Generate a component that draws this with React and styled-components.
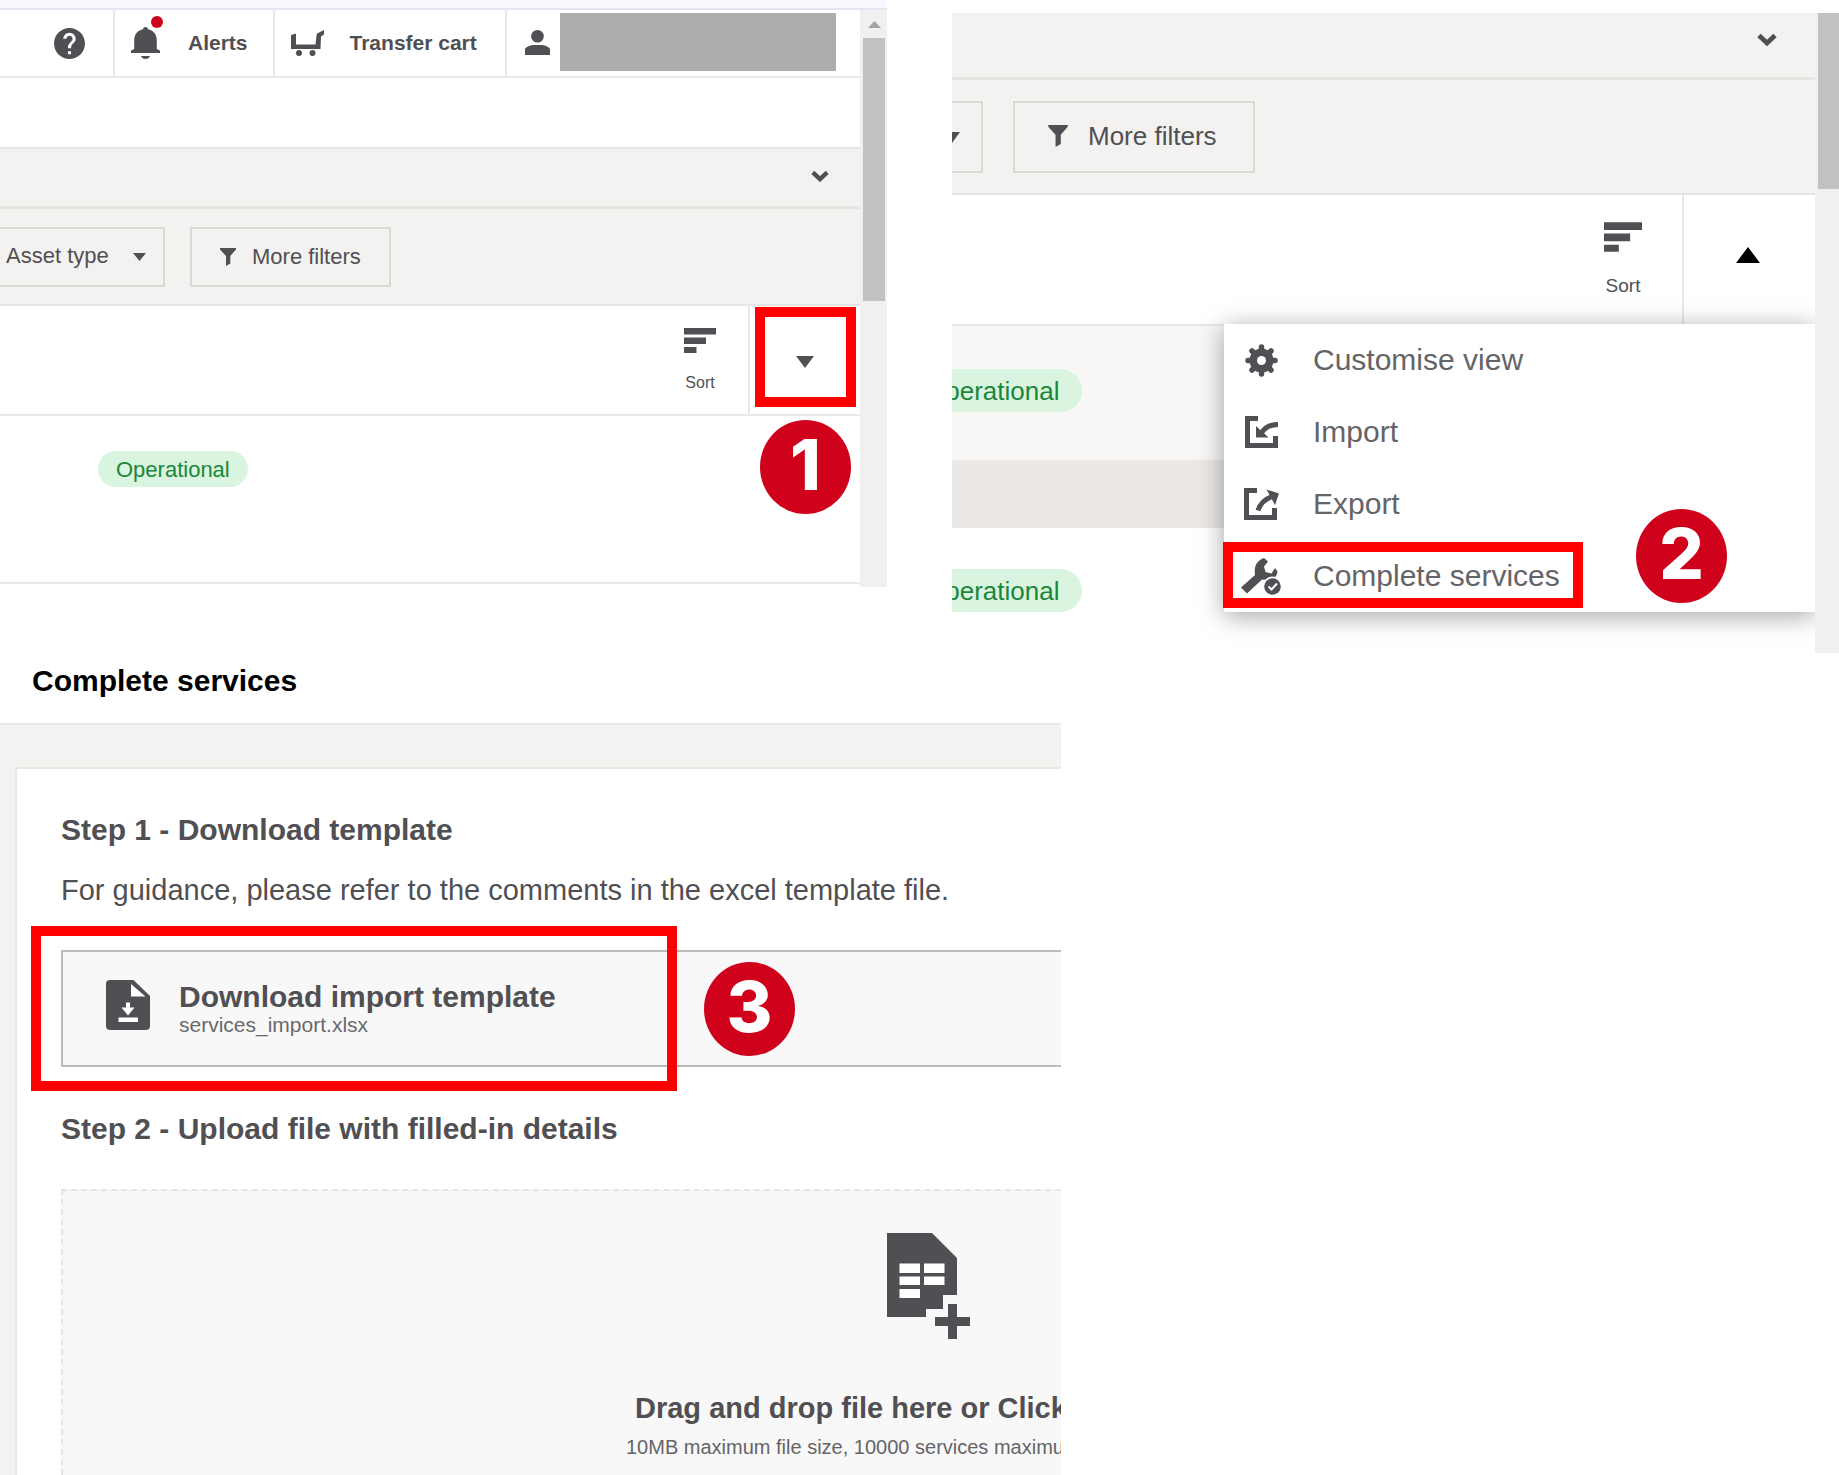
import React, { useState } from "react";
import styled, { createGlobalStyle } from "styled-components";

const GlobalStyle = createGlobalStyle`
  * {
    box-sizing: border-box;
  }
  body {
    margin: 0;
    background: #ffffff;
    color: #504f53;
    font-family: "Liberation Sans", Arial, sans-serif;
  }
  button, select, input {
    font-family: inherit;
    color: inherit;
    margin: 0;
  }
  svg {
    display: block;
    flex: none;
  }
`;

const Page = styled.main`
  min-height: 100vh;
  display: flex;
  flex-direction: column;
`;

const TopPanels = styled.div`
  display: flex;
  align-items: flex-start;
  gap: 65px;
`;

const Panel = styled.section`
  flex: 1;
  min-width: 0;
  display: flex;
  margin-top: ${(p) => (p.$offset ? "13px" : "0")};
`;

const PanelColumn = styled.div`
  flex: 1;
  min-width: 0;
  display: flex;
  flex-direction: column;
`;

const PanelBody = styled.div`
  flex: 1;
  min-width: 0;
  display: flex;
`;

const PanelContent = styled.div`
  flex: 1;
  min-width: 0;
  overflow: hidden;
  padding-bottom: ${(p) => (p.$large ? "0" : "3px")};
`;

const WindowEdge = styled.div`
  height: 10px;
  background: #f8f9ff;
  border-bottom: 2px solid #e4e5ee;
`;

const ScrollTrack = styled.div`
  width: ${(p) => (p.$large ? "24px" : "27px")};
  background: #f0f0f0;
  display: flex;
  flex-direction: column;
  align-items: center;
  gap: 10px;
  padding: ${(p) => (p.$large ? "0 0 0 3px" : "11px 2px 0 3px")};
`;

const ScrollThumb = styled.div`
  width: 100%;
  height: ${(p) => (p.$large ? "176px" : "263px")};
  background: #c1c1c1;
`;

const Header = styled.header`
  display: flex;
  min-height: 68px;
  border-bottom: 2px solid #e7e7e5;
`;

const HeaderItem = styled.button`
  position: relative;
  display: flex;
  align-items: center;
  gap: ${(p) => p.$gap || "0"};
  padding: ${(p) => p.$pad};
  background: none;
  border: none;
  border-right: 2px solid #e7e7e5;
  font-size: 21px;
  font-weight: 700;
  white-space: nowrap;
`;

const AlertDot = styled.span`
  position: absolute;
  left: 36px;
  top: 6px;
  width: 12px;
  height: 12px;
  border-radius: 50%;
  background: #d0021b;
`;

const Account = styled.div`
  flex: 1;
  display: flex;
  align-items: center;
  gap: 10px;
  padding: 0 24px 2px 18px;
`;

const AccountName = styled.div`
  flex: 1;
  height: 58px;
  background: #adadad;
`;

const Spacer = styled.div`
  height: 69px;
`;

const CollapseBar = styled.div`
  display: flex;
  justify-content: flex-end;
  align-items: center;
  min-height: ${(p) => (p.$large ? "67px" : "62px")};
  padding: ${(p) => (p.$large ? "0 38px 12px 0" : "0 31px 3px 0")};
  background: #f3f2f0;
  border-top: ${(p) => (p.$large ? "none" : "2px solid #e6e5e1")};
  border-bottom: 3px solid #e6e5e1;
`;

const PlainButton = styled.button`
  display: block;
  padding: 0;
  border: none;
  background: none;
`;

const FilterBar = styled.div`
  display: flex;
  gap: ${(p) => (p.$large ? "30px" : "25px")};
  padding: ${(p) => (p.$large ? "21px 0 20px" : "18px 0 17px")};
  background: #f3f2f0;
  border-bottom: 2px solid #e6e5e1;
`;

const SelectBox = styled.div`
  position: relative;
  overflow: hidden;
  width: ${(p) => (p.$large ? "31px" : "165px")};
  height: ${(p) => (p.$large ? "72px" : "60px")};
  border: 2px solid #dad9d5;
  border-left: none;
  svg {
    position: absolute;
    left: ${(p) => (p.$large ? "-8px" : "133px")};
    top: ${(p) => (p.$large ? "29px" : "24px")};
    pointer-events: none;
  }
`;

const FilterSelect = styled.select`
  appearance: none;
  width: 100%;
  height: 100%;
  padding: 0 0 4px 6px;
  border: none;
  background: none;
  font-size: 22px;
`;

const FilterButton = styled.button`
  display: flex;
  align-items: center;
  gap: ${(p) => (p.$large ? "20px" : "16px")};
  height: ${(p) => (p.$large ? "72px" : "60px")};
  padding: ${(p) => (p.$large ? "0 36px 2px 33px" : "0 28px 0 28px")};
  border: 2px solid #dad9d5;
  background: none;
  font-size: ${(p) => (p.$large ? "26px" : "22px")};
  white-space: nowrap;
`;

const Toolbar = styled.div`
  position: relative;
  display: flex;
  justify-content: flex-end;
  min-height: ${(p) => (p.$large ? "129px" : "108px")};
`;

const SortButton = styled.button`
  display: flex;
  flex-direction: column;
  align-items: center;
  gap: ${(p) => (p.$large ? "22px" : "20px")};
  padding: ${(p) => (p.$large ? "27px 40px 0 0" : "22px 32px 0 0")};
  border: none;
  background: none;
  font-size: ${(p) => (p.$large ? "19px" : "16px")};
  line-height: ${(p) => (p.$large ? "24px" : "20px")};
`;

const MenuToggle = styled.button`
  position: relative;
  display: flex;
  align-items: center;
  justify-content: center;
  width: ${(p) => (p.$large ? "133px" : "112px")};
  padding: ${(p) => (p.$large ? "0 4px 10px 0" : "4px 0 0")};
  border: none;
  border-left: 2px solid #e7e7e5;
  background: none;
`;

const AssetRow = styled.div`
  display: flex;
  position: relative;
  align-items: flex-start;
  min-height: ${(p) => p.$height};
  padding: ${(p) => p.$pad};
  background: ${(p) => p.$bg || "#ffffff"};
  border-top: ${(p) => (p.$line ? "2px solid #e9e9e5" : "none")};
`;

const RowLine = styled.div`
  height: 2px;
  background: #e9e9e5;
`;

const RowBand = styled.div`
  height: 68px;
  background: #ebe8e5;
`;

const Status = styled.span`
  height: ${(p) => (p.$large ? "43px" : "36px")};
  line-height: ${(p) => (p.$large ? "44px" : "37px")};
  padding: ${(p) => (p.$large ? "0 23px" : "0 18px")};
  margin-left: ${(p) => (p.$large ? "-50px" : "98px")};
  border-radius: 22px;
  background: #d9f4df;
  color: #1b873b;
  font-size: ${(p) => (p.$large ? "26px" : "22px")};
`;

const Menu = styled.ul`
  position: absolute;
  top: 100%;
  right: 0;
  z-index: 1;
  width: 591px;
  margin: 0;
  padding: 0;
  list-style: none;
  background: #ffffff;
  box-shadow: 0 4px 24px rgba(0, 0, 0, 0.36);
`;

const MenuEntry = styled.li`
  position: relative;
`;

const MenuItem = styled.button`
  display: flex;
  align-items: center;
  gap: 32px;
  width: 100%;
  height: 72px;
  padding: 0 0 0 17px;
  border: none;
  background: none;
  color: #656467;
  font-size: 30px;
`;

const MenuIcon = styled.span`
  display: flex;
  justify-content: center;
  width: 40px;
`;

const Frame = styled.span`
  position: absolute;
  left: ${(p) => p.$left};
  top: ${(p) => p.$top};
  width: ${(p) => p.$width};
  height: ${(p) => p.$height};
  border: 10px solid #ff0000;
  pointer-events: none;
`;

const StepNumber = styled.span`
  position: absolute;
  left: ${(p) => p.$left || "auto"};
  right: ${(p) => p.$right || "auto"};
  top: ${(p) => p.$top};
  z-index: 2;
  width: 91px;
  height: 94px;
  border-radius: 50%;
  background: #d0021b;
  color: #ffffff;
  font-family: Inter, "Liberation Sans", sans-serif;
  font-size: 70px;
  font-weight: 800;
  line-height: 89px;
  text-align: center;
`;

const Lower = styled.div`
  flex: 1;
  display: grid;
  grid-template-columns: 1061fr 778fr;
`;

const ServicesPanel = styled.section`
  min-width: 0;
  overflow: hidden;
  display: flex;
  flex-direction: column;
`;

const PanelTitle = styled.h1`
  margin: 0;
  padding: 10px 0 24px 32px;
  border-bottom: 2px solid #e8e7e4;
  color: #000000;
  font-size: 30px;
  line-height: 36px;
`;

const ServicesBody = styled.div`
  flex: 1;
  display: flex;
  padding: 42px 0 0 15px;
  background: #f3f2f0;
`;

const Card = styled.div`
  flex: 1;
  min-width: 0;
  display: flex;
  flex-direction: column;
  padding: 43px 0 0 44px;
  border-top: 2px solid #e8e7e4;
  border-left: 2px solid #e8e7e4;
  background: #ffffff;
`;

const StepTitle = styled.h2`
  margin: 0;
  font-size: 30px;
  line-height: 36px;
`;

const Guidance = styled.p`
  margin: 24px 0 0;
  font-size: 29px;
  line-height: 36px;
  white-space: nowrap;
`;

const DownloadArea = styled.div`
  position: relative;
  margin: 42px 0 44px;
`;

const DownloadButton = styled.button`
  display: flex;
  align-items: flex-start;
  gap: 29px;
  width: 100%;
  min-height: 117px;
  padding: 28px 0 0 43px;
  border: 2px solid #bcbcb6;
  border-right: none;
  background: #f8f8f8;
  text-align: left;
`;

const DownloadName = styled.strong`
  display: block;
  font-size: 30px;
  line-height: 34px;
`;

const DownloadFile = styled.span`
  display: block;
  font-size: 21px;
  line-height: 22px;
  color: #6a696c;
`;

const DropZone = styled.label`
  flex: 1;
  margin-top: 42px;
  padding-top: 42px;
  overflow: hidden;
  white-space: nowrap;
  background: #f8f8f8;
  border-top: 2px dashed #e5e5e1;
  border-left: 2px dashed #e5e5e1;
  svg {
    margin-left: 824px;
  }
`;

const FileInput = styled.input`
  display: none;
`;

const DropTitle = styled.strong`
  display: block;
  margin: 50px 0 0 572px;
  font-size: 29px;
  line-height: 36px;
`;

const DropHint = styled.span`
  display: block;
  margin: 10px 0 0 563px;
  font-size: 20px;
  line-height: 22px;
  color: #656467;
`;

const INK = "#504f53";

const HelpIcon = () => (
  <svg width="31" height="31" viewBox="2 2 20 20" fill={INK}>
    <path d="M12 2C6.48 2 2 6.48 2 12s4.48 10 10 10 10-4.48 10-10S17.52 2 12 2zm1 17h-2v-2h2v2zm2.07-7.75l-.9.92C13.45 12.9 13 13.5 13 15h-2v-.5c0-1.1.45-2.1 1.17-2.83l1.24-1.26c.37-.36.59-.86.59-1.41 0-1.1-.9-2-2-2s-2 .9-2 2H8c0-2.21 1.79-4 4-4s4 1.79 4 4c0 .88-.36 1.68-.93 2.25z" />
  </svg>
);

const BellIcon = () => (
  <svg width="29" height="32" viewBox="0 0 29 32" fill={INK}>
    <path d="M14.5 0c1.5 0 2.5 1 2.5 2.2 5 1 8.800 5 8.800 10.800v9l3.200 1.500v2.500H0v-2.500l3.200-1.500V13c0-5.800 3.800-9.800 8.800-10.800C12 1 13 0 14.5 0z" />
    <path d="M10 29h9c-.6 1.8-2.300 3-4.500 3s-3.900-1.200-4.500-3z" />
  </svg>
);

const CartIcon = () => (
  <svg width="33" height="26" viewBox="0 0 33 26" fill={INK}>
    <path d="M0 5 5 3.5V14.5H24.5L25.5 5.5C25.5 4 26 3.5 27 3L33 0V4.5L30 6.5 29.5 19H0z" />
    <circle cx="8" cy="23" r="3" />
    <circle cx="21.5" cy="23" r="3" />
  </svg>
);

const UserIcon = () => (
  <svg width="25" height="25" viewBox="0 0 25 25" fill={INK}>
    <circle cx="12.5" cy="6.3" r="6.3" />
    <path d="M0 25v-5.500C0 17 6 15 9 15h7c3 0 9 2 9 4.500V25z" />
  </svg>
);

const Chevron = ({ width }) => (
  <svg width={width} height={Math.round(width * 0.65)} viewBox="0 0 20 13">
    <path d="M2 2.5 10 10 18 2.5" fill="none" stroke={INK} strokeWidth="4.8" />
  </svg>
);

const Triangle = ({ width, height, up, color = INK }) => (
  <svg width={width} height={height} viewBox="0 0 20 12" preserveAspectRatio="none" fill={color}>
    <path d={up ? "M0 12 10 0 20 12z" : "M0 0H20L10 12z"} />
  </svg>
);

const FunnelIcon = ({ width, height }) => (
  <svg width={width} height={height} viewBox="0 0 16 18" fill={INK}>
    <path d="M0 0h16v1.500L10.300 8v7.500L6 18V8L0 1.500z" />
  </svg>
);

const SortIcon = ({ width, height }) => (
  <svg width={width} height={height} viewBox="0 0 32 25" fill={INK}>
    <path d="M0 0h32v6.500H0zM0 9.500h22V16H0zM0 19h12.500v6H0z" />
  </svg>
);

const GearIcon = () => (
  <svg width="33" height="33" viewBox="0 0 33 33">
    <g stroke={INK} strokeWidth="5.5" strokeLinecap="round">
      <path d="M16.500 3v27M3 16.500h27M7 7l19 19M26 7 7 26" />
    </g>
    <circle cx="16.5" cy="16.5" r="12" fill={INK} />
    <circle cx="16.5" cy="16.5" r="4.5" fill="#ffffff" />
  </svg>
);

const ImportIcon = () => (
  <svg width="33" height="32" viewBox="0 0 33 32">
    <path d="M13 2.500H2.500v27h28V20" fill="none" stroke={INK} strokeWidth="5" />
    <path d="M33 8.500C26 8.500 20 11 16.500 17" fill="none" stroke={INK} strokeWidth="5" />
    <path d="M11 10v11.500h12.500z" fill={INK} />
  </svg>
);

const ExportIcon = () => (
  <svg width="35" height="32" viewBox="0 0 35 32">
    <path d="M13 2.500H2.500v27h28V20" fill="none" stroke={INK} strokeWidth="5" />
    <path d="M14 22.500C16 16 21 11 28 8.500" fill="none" stroke={INK} strokeWidth="5" />
    <path d="M22.500 1.500 35 5.500 31 17z" fill={INK} />
  </svg>
);

const ServiceIcon = () => (
  <svg width="40" height="37" viewBox="0 0 40 37">
    <path
      d="M0 29.500 14 17C13 9 15 3 23 0l4 3.500-4 5 1.500 5.500 6 1.500L34 10l2.500 3.500C36 18 34 20 30 21c-4 1-7 1-9 .5L6 35.500z"
      fill={INK}
    />
    <circle cx="31.5" cy="28.5" r="10" fill="#ffffff" />
    <circle cx="31.5" cy="28.5" r="8.3" fill={INK} />
    <path d="m27.500 28.500 3 3 5.500-6" fill="none" stroke="#ffffff" strokeWidth="2" />
  </svg>
);

const FileDownloadIcon = () => (
  <svg width="44" height="50" viewBox="0 0 44 50">
    <path d="M4 0h23.500L44 16v30a4 4 0 0 1-4 4H4a4 4 0 0 1-4-4V4a4 4 0 0 1 4-4z" fill={INK} />
    <path d="M25 4v12.500h14.500zM20 22.500h4v5h4.500L22 35.500l-6.500-8H20zM12.500 37.500h19.500V42H12.500z" fill="#ffffff" />
  </svg>
);

const SheetPlusIcon = () => (
  <svg width="83" height="107" viewBox="0 0 83 107" fill={INK}>
    <path d="M0 0H45L70 25V62H56V76H39V84H0z" />
    <path d="M61 71h9v13h13v9H70v13h-9V93H48v-9h13z" />
    <path d="M12.500 30.500H33V40H12.500zM37 30.500h20.500V40H37zM12.500 43.500H33V52H12.500zM37 43.500h20.500V52H37zM12.500 56H33v9H12.500z" fill="#ffffff" />
  </svg>
);

const menuItems = [
  { label: "Customise view", icon: <GearIcon /> },
  { label: "Import", icon: <ImportIcon /> },
  { label: "Export", icon: <ExportIcon /> },
  { label: "Complete services", icon: <ServiceIcon />, step: "2" },
];

function AssetListPanel() {
  return (
    <Panel>
      <PanelColumn>
        <WindowEdge />
        <PanelBody>
          <PanelContent>
            <Header>
              <HeaderItem $pad="0 28px 0 54px" aria-label="Help">
                <HelpIcon />
              </HeaderItem>
              <HeaderItem $pad="0 25px 0 16px" $gap="28px">
                <BellIcon />
                <AlertDot />
                Alerts
              </HeaderItem>
              <HeaderItem $pad="0 28px 0 16px" $gap="26px">
                <CartIcon />
                Transfer cart
              </HeaderItem>
              <Account>
                <UserIcon />
                <AccountName />
              </Account>
            </Header>
            <Spacer />
            <CollapseBar>
              <PlainButton aria-label="Expand">
                <Chevron width={18} />
              </PlainButton>
            </CollapseBar>
            <FilterBar>
              <SelectBox>
                <FilterSelect aria-label="Asset type">
                  <option>Asset type</option>
                </FilterSelect>
                <Triangle width={13} height={8} />
              </SelectBox>
              <FilterButton>
                <FunnelIcon width={16} height={18} />
                More filters
              </FilterButton>
            </FilterBar>
            <Toolbar>
              <SortButton>
                <SortIcon width={32} height={25} />
                Sort
              </SortButton>
              <MenuToggle aria-label="Open menu">
                <Triangle width={18} height={12} />
                <Frame $left="5px" $top="1px" $width="101px" $height="100px" />
              </MenuToggle>
            </Toolbar>
            <AssetRow $height="168px" $pad="35px 0 0" $line>
              <Status>Operational</Status>
              <StepNumber $right="9px" $top="4px">
                1
              </StepNumber>
            </AssetRow>
            <RowLine />
          </PanelContent>
          <ScrollTrack>
            <Triangle width={13} height={7} up color="#a3a3a3" />
            <ScrollThumb />
          </ScrollTrack>
        </PanelBody>
      </PanelColumn>
    </Panel>
  );
}

function AssetMenuPanel() {
  const [open, setOpen] = useState(true);

  return (
    <Panel $offset>
      <PanelContent $large>
        <CollapseBar $large>
          <PlainButton aria-label="Expand">
            <Chevron width={20} />
          </PlainButton>
        </CollapseBar>
        <FilterBar $large>
          <SelectBox $large>
            <FilterSelect aria-label="Asset type">
              <option></option>
            </FilterSelect>
            <Triangle width={16} height={11} />
          </SelectBox>
          <FilterButton $large>
            <FunnelIcon width={20} height={22} />
            More filters
          </FilterButton>
        </FilterBar>
        <Toolbar $large>
          <SortButton $large>
            <SortIcon width={38} height={30} />
            Sort
          </SortButton>
          <MenuToggle
            $large
            aria-label="Close menu"
            aria-expanded={open}
            onClick={() => setOpen(!open)}
          >
            <Triangle width={24} height={16} up={open} color="#000000" />
          </MenuToggle>
          {open && (
            <Menu>
              {menuItems.map((item) => (
                <MenuEntry key={item.label}>
                  <MenuItem>
                    <MenuIcon>{item.icon}</MenuIcon>
                    {item.label}
                  </MenuItem>
                  {item.step && (
                    <>
                      <Frame $left="-1px" $top="2px" $width="360px" $height="66px" />
                      <StepNumber $left="412px" $top="-31px">
                        {item.step}
                      </StepNumber>
                    </>
                  )}
                </MenuEntry>
              ))}
            </Menu>
          )}
        </Toolbar>
        <AssetRow $height="136px" $pad="43px 0 0" $bg="#f8f7f6" $line>
          <Status $large>Operational</Status>
        </AssetRow>
        <RowBand />
        <AssetRow $height="125px" $pad="41px 0 0">
          <Status $large>Operational</Status>
        </AssetRow>
      </PanelContent>
      <ScrollTrack $large>
        <ScrollThumb $large />
      </ScrollTrack>
    </Panel>
  );
}

function CompleteServices() {
  return (
    <ServicesPanel>
      <PanelTitle>Complete services</PanelTitle>
      <ServicesBody>
        <Card>
          <StepTitle>Step 1 - Download template</StepTitle>
          <Guidance>
            For guidance, please refer to the comments in the excel template file.
          </Guidance>
          <DownloadArea>
            <DownloadButton>
              <FileDownloadIcon />
              <span>
                <DownloadName>Download import template</DownloadName>
                <DownloadFile>services_import.xlsx</DownloadFile>
              </span>
            </DownloadButton>
            <Frame $left="-30px" $top="-24px" $width="646px" $height="165px" />
            <StepNumber $left="643px" $top="12px">
              3
            </StepNumber>
          </DownloadArea>
          <StepTitle>Step 2 - Upload file with filled-in details</StepTitle>
          <DropZone>
            <FileInput type="file" />
            <SheetPlusIcon />
            <DropTitle>Drag and drop file here or Click</DropTitle>
            <DropHint>10MB maximum file size, 10000 services maximum</DropHint>
          </DropZone>
        </Card>
      </ServicesBody>
    </ServicesPanel>
  );
}

function App() {
  return (
    <Page>
      <GlobalStyle />
      <TopPanels>
        <AssetListPanel />
        <AssetMenuPanel />
      </TopPanels>
      <Lower>
        <CompleteServices />
      </Lower>
    </Page>
  );
}

export default App;
